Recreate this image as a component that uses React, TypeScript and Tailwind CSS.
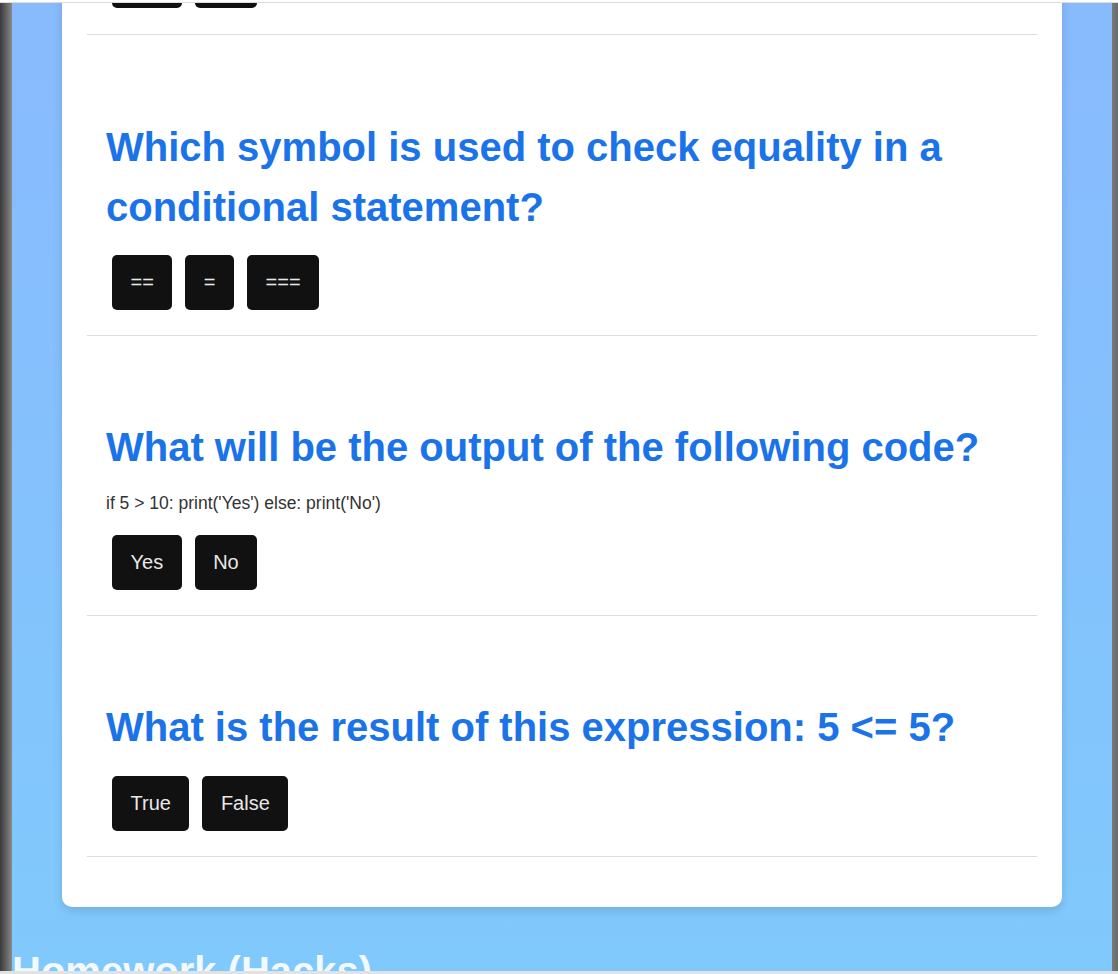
import React from "react";

const font = { fontFamily: '"Liberation Sans", Arial, sans-serif' };

function Btn({ label }: { label: string }) {
  return (
    <button className="h-[55px] px-[18.5px] rounded-[5px] bg-[#111111] text-[#e8e8e8] text-[20px] leading-[23px] flex items-center">
      {label}
    </button>
  );
}

function Buttons({ labels }: { labels: string[] }) {
  return (
    <div className="flex gap-[13px] pl-[6px]">
      {labels.map((l) => (
        <Btn key={l} label={l} />
      ))}
    </div>
  );
}

function Heading({ children }: { children: React.ReactNode }) {
  return (
    <h2 className="text-[40px] leading-[60px] font-bold text-[#1a73e8]">{children}</h2>
  );
}

export default function App() {
  return (
    <div style={font} className="w-[1118px] h-[974px] flex flex-col overflow-hidden bg-white">
      <div className="h-[2px] bg-white shrink-0" />
      <div className="h-[1px] bg-[#dcdcdc] shrink-0" />
      <div className="flex-1 flex min-h-0">
        <div className="w-[12px] shrink-0 bg-linear-to-r from-[#3a3a3a] to-[#8a8a8a]" />
        <div className="flex-1 overflow-hidden bg-linear-to-b from-[#88bafe] to-[#80c9fc]">
          <div className="mx-[50px] -mt-[50px] bg-white rounded-[10px] shadow-[0_4px_10px_rgba(0,0,0,0.12)] px-[25px] pb-[50px]">
            <div className="px-[19px] pb-[26px] border-b border-[#dddddd]">
              <Buttons labels={["Yes", "No"]} />
            </div>
            <div className="px-[19px] pt-[82px] pb-[25px] border-b border-[#dddddd]">
              <Heading>
                Which symbol is used to check equality in a conditional statement?
              </Heading>
              <div className="mt-[18px]">
                <Buttons labels={["==", "=", "==="]} />
              </div>
            </div>
            <div className="px-[19px] pt-[81px] pb-[25px] border-b border-[#dddddd]">
              <Heading>What will be the output of the following code?</Heading>
              <p className="mt-[14px] text-[17.5px] leading-[24px] text-[#333333]">
                if 5 &gt; 10: print('Yes') else: print('No')
              </p>
              <div className="mt-[20px]">
                <Buttons labels={["Yes", "No"]} />
              </div>
            </div>
            <div className="px-[19px] pt-[81px] pb-[25px] border-b border-[#dddddd]">
              <Heading>What is the result of this expression: 5 &lt;= 5?</Heading>
              <div className="mt-[19px]">
                <Buttons labels={["True", "False"]} />
              </div>
            </div>
          </div>
          <h2 className="mt-[41px] text-[40px] leading-[46px] font-bold text-[#f2f9ff] whitespace-nowrap">
            Homework (Hacks)
          </h2>
        </div>
        <div className="w-[6px] shrink-0 bg-linear-to-r from-[#7a7a7a] to-[#6a6a6a]" />
      </div>
      <div className="h-[3px] bg-[#e2e2e2] shrink-0" />
    </div>
  );
}
